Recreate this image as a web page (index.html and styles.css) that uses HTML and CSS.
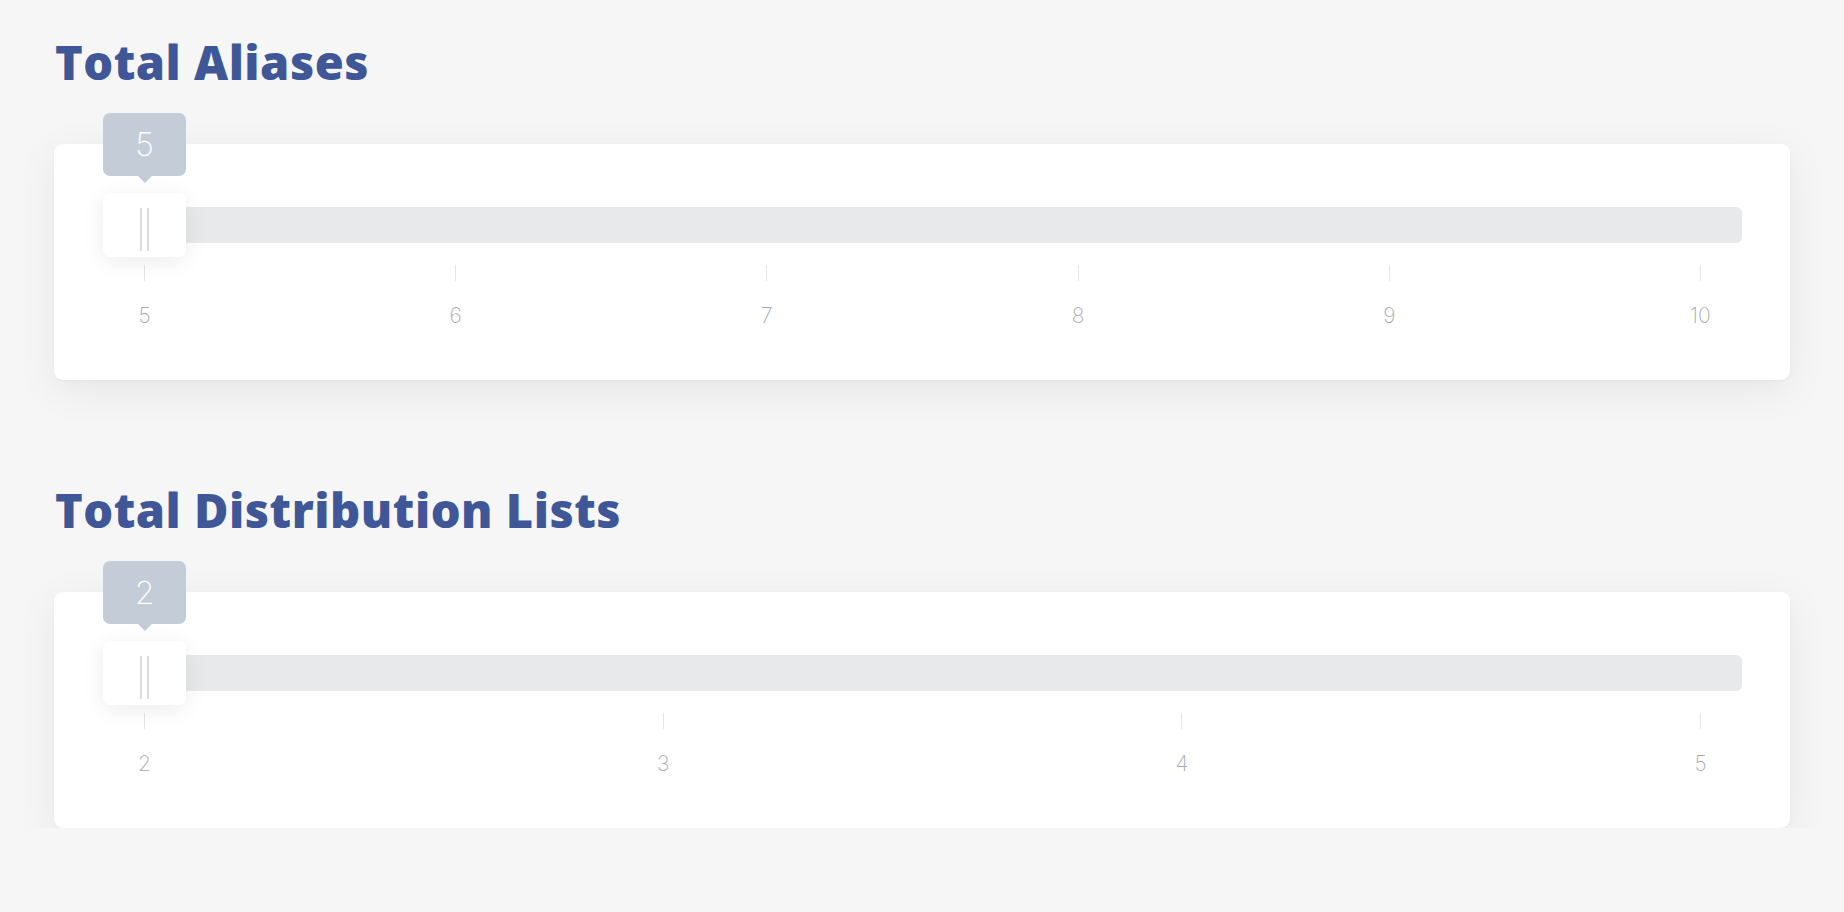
FILE: index.html
```html
<!DOCTYPE html>
<html lang="en">
<head>
<meta charset="utf-8">
<title>Totals</title>
<link rel="stylesheet" href="styles.css">
</head>
<body>
<main class="page">
  <section class="group">
    <h2 class="group-title">Total Aliases</h2>
    <div class="card">
      <div class="slider">
        <div class="rail">
          <div class="track"></div>
          <div class="handle">
            <div class="bubble">5</div>
            <span class="grip"></span><span class="grip"></span>
          </div>
        </div>
        <div class="scale">
          <div class="mark"><span class="tick"></span><span class="label">5</span></div>
          <div class="mark"><span class="tick"></span><span class="label">6</span></div>
          <div class="mark"><span class="tick"></span><span class="label">7</span></div>
          <div class="mark"><span class="tick"></span><span class="label">8</span></div>
          <div class="mark"><span class="tick"></span><span class="label">9</span></div>
          <div class="mark"><span class="tick"></span><span class="label">10</span></div>
        </div>
      </div>
    </div>
  </section>
  <section class="group">
    <h2 class="group-title">Total Distribution Lists</h2>
    <div class="card">
      <div class="slider">
        <div class="rail">
          <div class="track"></div>
          <div class="handle">
            <div class="bubble">2</div>
            <span class="grip"></span><span class="grip"></span>
          </div>
        </div>
        <div class="scale">
          <div class="mark"><span class="tick"></span><span class="label">2</span></div>
          <div class="mark"><span class="tick"></span><span class="label">3</span></div>
          <div class="mark"><span class="tick"></span><span class="label">4</span></div>
          <div class="mark"><span class="tick"></span><span class="label">5</span></div>
        </div>
      </div>
    </div>
  </section>
</main>
</body>
</html>
```

FILE: styles.css
```css
html, body {
  margin: 0;
  padding: 0;
  background: #f6f6f6;
}

body {
  font-family: "Open Sans", "Liberation Sans", sans-serif;
}

.page {
  display: flex;
  flex-direction: column;
  gap: 100px;
  padding: 32px 54px 0 54px;
}

.group {
  display: flex;
  flex-direction: column;
}

.group-title {
  margin: 0 0 0 1px;
  font-size: 47px;
  line-height: 60px;
  font-weight: 800;
  color: #3f5796;
  letter-spacing: 0.5px;
}

.card {
  margin-top: 52px;
  background: #ffffff;
  border-radius: 9px;
  box-shadow: 0 10px 40px rgba(0, 0, 0, 0.07), 0 1px 3px rgba(0, 0, 0, 0.03);
  height: 236px;
  box-sizing: border-box;
  padding: 49px 48px 0 49px;
}

.slider {
  display: flex;
  flex-direction: column;
}

.rail {
  position: relative;
  height: 64px;
  display: flex;
  align-items: center;
}

.track {
  flex: 1;
  height: 36px;
  background: #e8e9eb;
  border-radius: 6px;
}

.handle {
  position: absolute;
  left: 0;
  top: 0;
  width: 83px;
  height: 64px;
  background: #ffffff;
  border-radius: 7px;
  box-shadow: 0 4px 22px rgba(0, 0, 0, 0.08);
  display: flex;
  justify-content: center;
  align-items: center;
  gap: 5px;
}

.grip {
  width: 2px;
  height: 43px;
  margin-top: 8px;
  background: #dcdde0;
}

.bubble {
  position: absolute;
  left: 0;
  bottom: 81px;
  width: 83px;
  height: 63px;
  border-radius: 7px;
  background: #c3ccd7;
  color: #ffffff;
  font-family: "Inter", "Open Sans", sans-serif;
  font-weight: 200;
  font-size: 32px;
  line-height: 63px;
  text-align: center;
}

.bubble::after {
  content: "";
  position: absolute;
  left: 50%;
  bottom: -7px;
  margin-left: -7px;
  border-left: 7px solid transparent;
  border-right: 7px solid transparent;
  border-top: 7px solid #c3ccd7;
}

.scale {
  display: flex;
  justify-content: space-between;
  padding: 0 41px 0 41px;
  margin-top: 8px;
}

.mark {
  width: 1px;
  display: flex;
  flex-direction: column;
  align-items: center;
}

.tick {
  width: 1px;
  height: 16px;
  background: #e6e6e8;
}

.label {
  margin-top: 23px;
  font-family: "Inter", "Open Sans", sans-serif;
  font-weight: 200;
  font-size: 21px;
  line-height: 24px;
  color: #a9a9ad;
  white-space: nowrap;
}
```
